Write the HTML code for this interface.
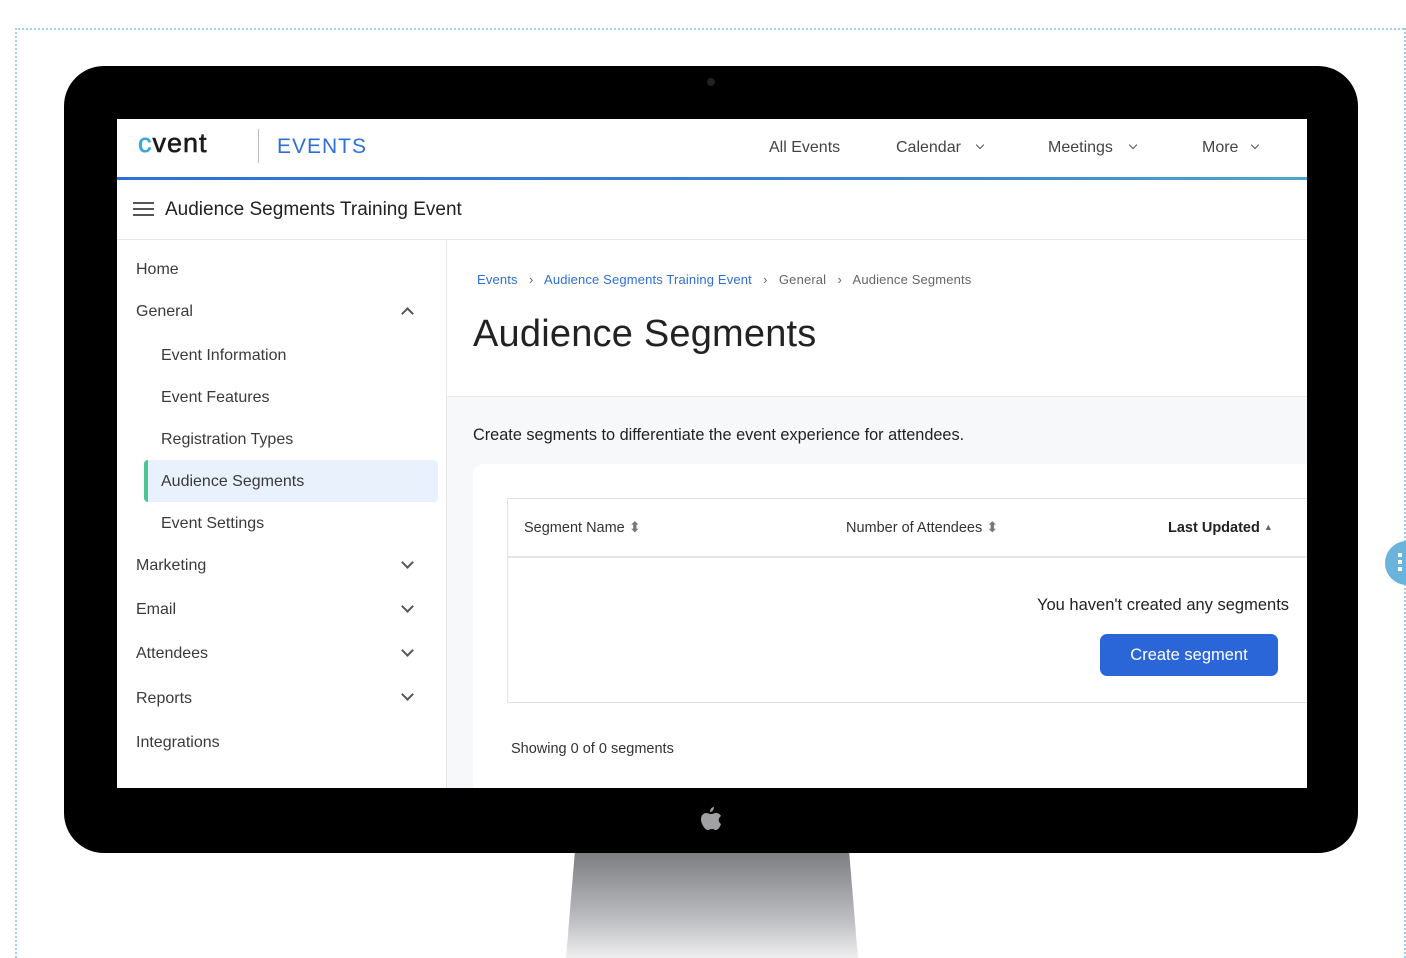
<!DOCTYPE html>
<html><head><style>
*{margin:0;padding:0;box-sizing:border-box}
body{width:1406px;height:958px;background:#fff;position:relative;overflow:hidden;font-family:"Liberation Sans",sans-serif;color:#333}
.a{position:absolute;white-space:nowrap}
.dot{position:absolute;border:0 dotted #9fd0ea}
.nav{font-size:16px;color:#444;top:139px}
.side{font-size:16px;color:#3a3a3a;left:136px}
.sub{left:161px}
.chev{position:absolute;width:9px;height:9px;border-right:2px solid #555;border-bottom:2px solid #555;transform:rotate(45deg)}
.sm{width:6px;height:6px;border-width:1.5px}
</style></head><body>
<div class="dot" style="left:15px;top:28px;width:1392px;border-top-width:2px"></div>
<div class="dot" style="left:15px;top:28px;height:930px;border-left-width:2px"></div>
<div class="dot" style="left:1404px;top:28px;height:930px;border-left-width:2px"></div>

<div class="a" style="left:566px;top:853px;width:292px;height:105px;background:linear-gradient(#7d7e82,#b9babd 60%,#eeeeef);clip-path:polygon(3% 0,97% 0,100% 100%,0 100%)"></div>
<div class="a" style="left:64px;top:66px;width:1294px;height:787px;background:#000;border-radius:40px"></div>
<div class="a" style="left:707px;top:78px;width:8px;height:8px;border-radius:50%;background:#222"></div>
<svg class="a" style="left:700px;top:806px" width="22" height="27" viewBox="0 0 22 27"><path d="M14 1c0 3-2 5-4 5 0-3 2-5 4-5zM11 8c2 0 3-1 5-1 2 0 4 1 5 3-3 2-3 6 0 8-1 3-3 6-5 6-2 0-2-1-4-1s-3 1-4 1c-3 0-7-6-7-11 0-4 3-6 5-6 2 0 3 1 5 1z" fill="#a0a0a2"/></svg>

<div class="a" style="left:117px;top:119px;width:1190px;height:669px;background:#fff;overflow:hidden">
 <div class="a" style="left:0;top:58px;width:1190px;height:3px;background:linear-gradient(90deg,#2f6fdc,#3a86d8 70%,#4aa9c4)"></div>
 <div class="a" style="left:0;top:120px;width:1190px;height:1px;background:#e6e6e6"></div>
 <div class="a" style="left:329px;top:121px;width:1px;height:560px;background:#e6e6e6"></div>
 <div class="a" style="left:330px;top:277px;width:860px;height:400px;background:#f7f8f9;border-top:1px solid #e8e8e8"></div>
 <div class="a" style="left:356px;top:345px;width:840px;height:340px;background:#fff;border-radius:10px"></div>
 <div class="a" style="left:390px;top:379px;width:810px;height:205px;border:1px solid #e2e2e2;background:#fff"></div>
 <div class="a" style="left:391px;top:437px;width:800px;height:2px;background:#e6e6e6"></div>
 <div class="a" style="left:920px;top:477px;font-size:16.5px;color:#222">You haven't created any segments</div>
</div>

<div class="a" style="left:138px;top:128px;font-size:27px;color:#1a1a1a;letter-spacing:1px;-webkit-text-stroke:0.6px #1a1a1a"><span style="color:#3aa7dc;-webkit-text-stroke-color:#3aa7dc">c</span>vent</div>
<div class="a" style="left:258px;top:129px;width:1px;height:34px;background:#bbb"></div>
<div class="a" style="left:277px;top:135px;font-size:21px;color:#2e6fd6;letter-spacing:1px">EVENTS</div>
<div class="a nav" style="left:769px">All Events</div>
<div class="a nav" style="left:896px">Calendar</div><div class="chev sm" style="left:977px;top:142px"></div>
<div class="a nav" style="left:1048px">Meetings</div><div class="chev sm" style="left:1130px;top:142px"></div>
<div class="a nav" style="left:1202px">More</div><div class="chev sm" style="left:1252px;top:142px"></div>

<div class="a" style="left:133px;top:202px;width:21px;height:2px;background:#555;box-shadow:0 6px 0 #555,0 12px 0 #555"></div>
<div class="a" style="left:165px;top:199px;font-size:19px;color:#222">Audience Segments Training Event</div>

<div class="a side" style="top:261px">Home</div>
<div class="a side" style="top:303px">General</div><div class="chev" style="left:403px;top:309px;transform:rotate(225deg)"></div>
<div class="a side sub" style="top:347px">Event Information</div>
<div class="a side sub" style="top:389px">Event Features</div>
<div class="a side sub" style="top:431px">Registration Types</div>
<div class="a" style="left:144px;top:460px;width:294px;height:42px;background:#e9f1fd;border-radius:4px;border-left:4px solid #4cc395"></div>
<div class="a side sub" style="top:473px">Audience Segments</div>
<div class="a side sub" style="top:515px">Event Settings</div>
<div class="a side" style="top:557px">Marketing</div><div class="chev" style="left:403px;top:558px"></div>
<div class="a side" style="top:601px">Email</div><div class="chev" style="left:403px;top:602px"></div>
<div class="a side" style="top:645px">Attendees</div><div class="chev" style="left:403px;top:646px"></div>
<div class="a side" style="top:690px">Reports</div><div class="chev" style="left:403px;top:690px"></div>
<div class="a side" style="top:734px">Integrations</div>

<div class="a" style="left:477px;top:272px;font-size:13px;color:#666;letter-spacing:0.15px"><span style="color:#2e6fd6">Events</span> &nbsp;&nbsp;›&nbsp;&nbsp; <span style="color:#2e6fd6">Audience Segments Training Event</span> &nbsp;&nbsp;›&nbsp;&nbsp; General &nbsp;&nbsp;›&nbsp;&nbsp; Audience Segments</div>
<div class="a" style="left:473px;top:313px;font-size:38px;color:#222;letter-spacing:0.2px">Audience Segments</div>
<div class="a" style="left:473px;top:426px;font-size:16.3px;color:#222">Create segments to differentiate the event experience for attendees.</div>
<div class="a" style="left:524px;top:520px;font-size:14.5px;color:#333">Segment Name <span style="color:#777">⬍</span></div>
<div class="a" style="left:846px;top:520px;font-size:14.5px;color:#333">Number of Attendees <span style="color:#777">⬍</span></div>
<div class="a" style="left:1168px;top:520px;font-size:14.5px;color:#222;font-weight:bold">Last Updated <span style="color:#666;font-size:9px;vertical-align:2px">▲</span></div>
<div class="a" style="left:1100px;top:634px;width:178px;height:42px;background:#2b66d9;border-radius:7px;color:#fff;font-size:16.5px;text-align:center;line-height:42px">Create segment</div>
<div class="a" style="left:511px;top:741px;font-size:14.5px;color:#333">Showing 0 of 0 segments</div>

<div class="a" style="left:1385px;top:541px;width:44px;height:44px;border-radius:50%;background:#6ab4dc"></div>
<div class="a" style="left:1398px;top:553px;width:4px;height:4px;background:#fff;box-shadow:0 7px 0 #fff,0 14px 0 #fff"></div>
</body></html>
